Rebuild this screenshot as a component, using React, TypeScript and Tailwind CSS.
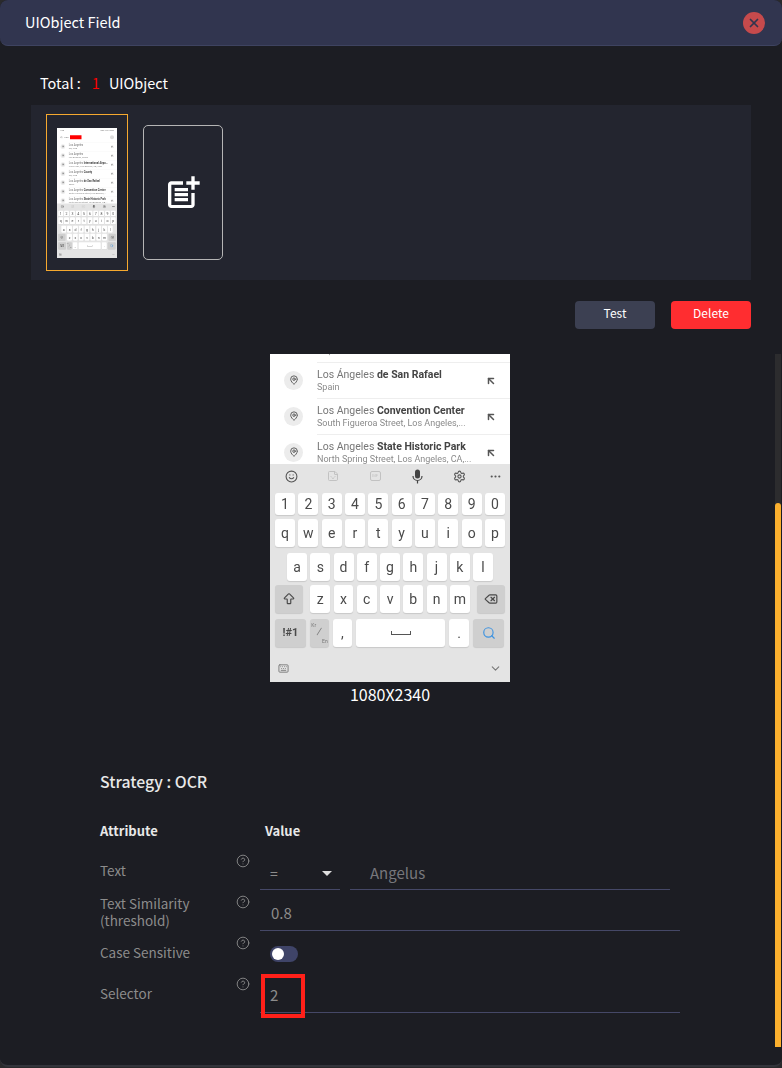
import { MdPostAdd } from 'react-icons/md'
import { CircleHelp, X, Smile, Sticker, Settings, MoreHorizontal, ArrowBigUp, Delete, Search, ChevronDown, MapPin, ArrowUpLeft, ArrowLeft, Keyboard } from 'lucide-react'

const suggestions = [
  { plain: 'Los Angeles', bold: '', sub: 'CA, USA' },
  { plain: 'Los Angeles', bold: '', sub: 'Los Angeles, Texas' },
  { plain: 'Los Angeles', bold: 'International Airpo...', sub: 'World Way, Los Angeles, CA, USA' },
  { plain: 'Los Angeles', bold: 'County', sub: 'CA, USA' },
  { plain: 'Los Ángeles', bold: 'de San Rafael', sub: 'Spain' },
  { plain: 'Los Angeles', bold: 'Convention Center', sub: 'South Figueroa Street, Los Angeles,...' },
  { plain: 'Los Angeles', bold: 'State Historic Park', sub: 'North Spring Street, Los Angeles, CA,...' },
]

function Key({ label, className = 'w-5 bg-white' }: { label: React.ReactNode; className?: string }) {
  return (
    <div className={`h-7 rounded-[3px] flex items-center justify-center text-[14px] text-[#4a4a4a] shadow-[0_1px_1px_rgba(0,0,0,0.12)] ${className}`}>
      {label}
    </div>
  )
}

function MicIcon() {
  return (
    <svg width="13" height="15" viewBox="0 0 13 15" className="text-[#444]">
      <rect x="4" y="0.5" width="5" height="9" rx="2.5" fill="currentColor" />
      <path d="M2 7a4.5 4.5 0 0 0 9 0M6.5 11.5V14.5" fill="none" stroke="currentColor" strokeWidth="1.2" />
    </svg>
  )
}

// Whole phone screen, 240x520. Thumbnail scales it down, preview shows the bottom part.
function PhoneScreen() {
  return (
    <div className="w-[240px] h-[520px] shrink-0 bg-white flex flex-col font-['Roboto',sans-serif]">
      <div className="h-[18px] shrink-0 px-3 flex items-center justify-between text-[8px] text-[#666]">
        <span>1:28 · · ·</span>
        <span>56% 7:51 100%</span>
      </div>
      <div className="h-[38px] shrink-0 px-3 flex items-center gap-[6px] text-[#666]">
        <ArrowLeft size={12} />
        <span className="w-4 text-[10px]">Los</span>
        <span className="w-[46px] h-4 bg-[#ff0000]" />
        <span className="ml-auto w-4 h-4 rounded-full bg-[#ddd]" />
      </div>
      <div className="flex-1 min-h-0 overflow-hidden flex flex-col">
        {suggestions.map((s, i) => (
          <div key={i} className="h-9 shrink-0 flex items-center pl-[14px]">
            <div className="w-[19px] h-[19px] rounded-full bg-[#ececec] flex items-center justify-center mr-[14px] shrink-0">
              <MapPin size={10} strokeWidth={2.2} className="text-[#555]" />
            </div>
            <div className="flex-1 min-w-0 h-9 border-t border-[#eee] flex items-center pr-[13px]">
              <div className="flex-1 min-w-0 leading-[13px] whitespace-nowrap">
                <div className="text-[10.5px] text-[#777]">
                  {s.plain} <span className="font-bold text-[#444]">{s.bold}</span>
                </div>
                <div className="text-[9px] text-[#8a8a8a]">{s.sub}</div>
              </div>
              <ArrowUpLeft size={12} strokeWidth={3} className="text-[#555] ml-1 shrink-0" />
            </div>
          </div>
        ))}
      </div>
      <div className="h-[218px] shrink-0 bg-[#e4e4e4] flex flex-col">
        <div className="h-[24px] shrink-0 flex items-center text-[#555]">
          <div className="w-[42px] flex justify-center"><Smile size={13} /></div>
          <div className="w-[42px] flex justify-center"><Sticker size={12} className="text-[#c2c2c2]" /></div>
          <div className="w-[42px] flex justify-center">
            <span className="w-[11px] h-[10px] border border-[#c2c2c2] rounded-[2px] flex items-center justify-center text-[4px] text-[#c2c2c2]">GIF</span>
          </div>
          <div className="w-[42px] flex justify-center"><MicIcon /></div>
          <div className="w-[42px] flex justify-center"><Settings size={13} /></div>
          <div className="w-[30px] flex justify-center"><MoreHorizontal size={13} /></div>
        </div>
        <div className="flex flex-col gap-[5px] px-[5px] pt-[5px]">
          <div className="flex justify-between">
            {'1234567890'.split('').map((k) => (
              <div key={k} className="w-5 h-[22px] bg-white rounded-[3px] flex items-center justify-center text-[14px] text-[#4a4a4a] shadow-[0_1px_1px_rgba(0,0,0,0.12)]">{k}</div>
            ))}
          </div>
          <div className="flex justify-between -mt-px">
            {'qwertyuiop'.split('').map((k) => <Key key={k} label={k} />)}
          </div>
          <div className="flex justify-between px-[12px] mt-px">
            {'asdfghjkl'.split('').map((k) => <Key key={k} label={k} />)}
          </div>
          <div className="flex gap-[3.4px] -mt-px">
            <Key label={<ArrowBigUp size={14} />} className="w-7 bg-[#cfcfcf] mr-[4px]" />
            {'zxcvbnm'.split('').map((k) => <Key key={k} label={k} />)}
            <Key label={<Delete size={14} />} className="w-7 bg-[#cfcfcf] ml-[4px]" />
          </div>
          <div className="flex gap-[4px] mt-px">
            <Key label={<span className="font-bold text-[11px]">!#1</span>} className="w-[31px] bg-[#cfcfcf]" />
            <Key
              label={
                <span className="flex h-full py-[3px] text-[#777]">
                  <span className="text-[5px] leading-[6px] self-start">Kr</span>
                  <span className="text-[13px] leading-[20px]">⁄</span>
                  <span className="text-[5px] leading-[6px] self-end">En</span>
                </span>
              }
              className="w-[19px] bg-[#cfcfcf]"
            />
            <Key label="," className="w-[19px] bg-white" />
            <Key label={<span className="w-5 h-[4px] border-x border-b border-[#555]" />} className="w-[89px] bg-white" />
            <Key label="." className="w-[20px] bg-white" />
            <Key label={<Search size={14} className="text-[#3f93e0]" />} className="w-[31px] bg-[#cfcfcf]" />
          </div>
        </div>
        <div className="flex-1 flex items-center justify-between px-[8px] pt-[7px] text-[#777]">
          <Keyboard size={11} />
          <ChevronDown size={13} />
        </div>
      </div>
    </div>
  )
}

function AttrRow({ label, value, labelTop }: { label: React.ReactNode; value: React.ReactNode; labelTop: string }) {
  return (
    <div className="flex h-[41px]">
      <div className={`w-[131px] text-[13.5px] leading-[17px] text-[#8c8c8c] ${labelTop}`}>{label}</div>
      <div className="w-[24px] mr-[5px] flex justify-center items-start pt-[3px]">
        <CircleHelp size={14} strokeWidth={1.5} className="text-[#8f8f8f]" />
      </div>
      <div className="flex-1 min-w-0">{value}</div>
    </div>
  )
}

export default function App() {
  return (
    <div className="w-[782px] h-[1068px] bg-[#2a2a2c] font-['Noto_Sans_CJK_KR','Noto_Sans',sans-serif] overflow-hidden">
      <div className="w-[782px] h-[1067px] bg-[#1c1d23] border-b-2 border-[#33343b] rounded-lg flex flex-col">
        {/* Header */}
        <div className="h-[46px] shrink-0 bg-[#31354f] border-b border-[#3e4360] rounded-lg pl-[25px] pr-[17px] flex items-center justify-between">
          <span className="text-[14.5px] text-white pb-[2px]">UIObject Field</span>
          <div className="w-[22px] h-[22px] rounded-full bg-[#c64a4c] flex items-center justify-center">
            <X size={14} strokeWidth={3} className="text-[#31354f]" />
          </div>
        </div>

        {/* Total */}
        <div className="h-[59px] shrink-0 pl-[40px] pt-[26px] text-[14.5px] leading-[22px] text-white">
          Total :<span className="text-[#ff0000] ml-[11px] mr-[9px]">1</span>UIObject
        </div>

        {/* UIObject list */}
        <div className="h-[175px] shrink-0 w-[720px] ml-[31px] bg-[#23252f] flex items-start pl-[15px] pt-[9px]">
          <div className="w-[82px] h-[157px] border border-[#f5a92f] flex items-center justify-center">
            <div className="w-[60px] h-[130px] overflow-hidden blur-[0.6px]">
              <div className="origin-top-left scale-25">
                <PhoneScreen />
              </div>
            </div>
          </div>
          <div className="w-[80px] h-[135px] ml-[15px] mt-[11px] border border-[#b5b5b5] rounded-[5px] flex items-center justify-center text-white">
            <MdPostAdd size={40} />
          </div>
        </div>

        {/* Actions */}
        <div className="h-[74px] shrink-0 flex justify-end gap-4 pr-[31px] pt-[21px]">
          <button className="w-20 h-7 pb-[4px] bg-[#3c4052] rounded text-[12px] text-white">Test</button>
          <button className="w-20 h-7 pb-[4px] bg-[#ff2d30] rounded text-[12px] text-white">Delete</button>
        </div>

        {/* Scroll area */}
        <div className="flex h-[693px] shrink-0">
          <div className="flex-1 min-w-0">
            <div className="w-[240px] h-[328px] ml-[270px] overflow-hidden flex flex-col justify-end blur-[0.3px]">
              <PhoneScreen />
            </div>
            <div className="w-[240px] ml-[270px] text-center text-[16px] leading-[24px] text-white">1080X2340</div>

            <div className="ml-[100px] mt-[64px] text-[15.8px] leading-[24px] font-medium text-[#e8e8e8]">Strategy : OCR</div>
            <div className="ml-[100px] mt-[27px] flex text-[13px] leading-[20px] font-bold text-[#e8e8e8]">
              <span className="w-[165px]">Attribute</span>
              <span>Value</span>
            </div>

            <div className="relative ml-[100px] mt-[10px] w-[580px]">
              <AttrRow
                label="Text"
                labelTop="pt-[11px]"
                value={
                  <div className="flex gap-[10px] h-[39px]">
                    <div className="w-[80px] border-b border-[#454867] flex items-center justify-between pl-[10px] pr-[8px] pt-[6px] text-[14px] text-[#8c8c8c]">
                      =
                      <span className="w-0 h-0 border-x-[5px] border-x-transparent border-t-[5px] border-t-[#dedede]" />
                    </div>
                    <div className="w-[320px] border-b border-[#454867] pl-[20px] pt-[11px] text-[15px] leading-[22px] text-[#77777c]">Angelus</div>
                  </div>
                }
              />
              <AttrRow
                label={<span>Text Similarity<br />(threshold)</span>}
                labelTop="pt-[3px]"
                value={
                  <div className="h-[39px] border-b border-[#454867] pl-[11px] pt-[10px] text-[15px] leading-[22px] text-[#8c8c8c]">0.8</div>
                }
              />
              <AttrRow
                label="Case Sensitive"
                labelTop="pt-[11px]"
                value={
                  <div className="pl-[10px] pt-[13px]">
                    <div className="w-7 h-4 rounded-full bg-[#3f4468] flex items-center pl-[2px]">
                      <span className="w-3 h-3 rounded-full bg-white" />
                    </div>
                  </div>
                }
              />
              <AttrRow
                label="Selector"
                labelTop="pt-[11px]"
                value={
                  <div className="h-[39px] border-b border-[#454867] pl-[10px] pt-[10px] text-[15px] leading-[22px] text-[#8c8c8c]">2</div>
                }
              />
              {/* Red annotation box from the original capture */}
              <div className="absolute left-[161px] top-[123px] w-[44px] h-[44px] border-4 border-[#ff2019]" />
            </div>
          </div>

          {/* Scrollbar */}
          <div className="w-[6px] mr-px bg-[#2c2c2e] pt-[149px]">
            <div className="h-full bg-[#fbb02e] rounded-t-[3px]" />
          </div>
        </div>
      </div>
    </div>
  )
}
